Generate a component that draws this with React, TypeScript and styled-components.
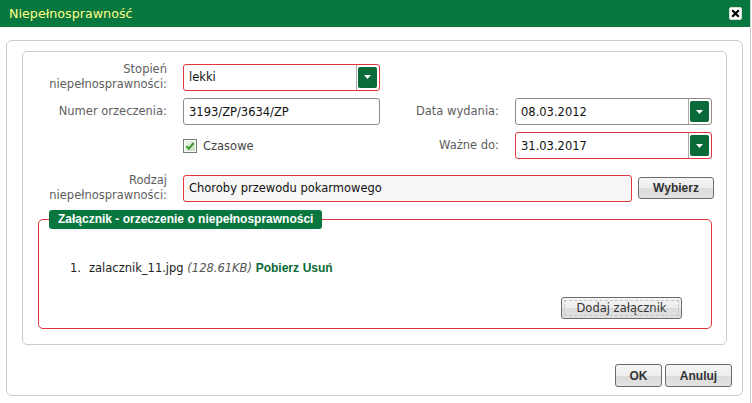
import React from "react";
import styled, { createGlobalStyle } from "styled-components";

const Global = createGlobalStyle`
  html, body { margin: 0; padding: 0; background: #fff; }
  body {
    font-family: "DejaVu Sans", Verdana, sans-serif;
    font-size: 11.5px;
    color: #222;
  }
  * { box-sizing: border-box; }
`;

const GREEN = "#08763f";
const RED = "#e1373c";
const BOLD_FONT = `"Liberation Sans", Arial, sans-serif`;

const Dialog = styled.div`
  width: 751px;
  height: 403px;
  border-right: 1px solid #cfcfcf;
  display: flex;
  flex-direction: column;
  background: #fff;
`;

const TitleBar = styled.div`
  height: 27px;
  flex: none;
  background: ${GREEN};
  display: flex;
  align-items: center;
  justify-content: space-between;
  padding: 0 8px 0 9px;
  color: #ffff86;
  font-size: 12.7px;
`;

const CloseButton = styled.div`
  width: 13px;
  height: 13px;
  background: #fff;
  border: 1px solid #d8d8d8;
  border-radius: 2px;
  display: flex;
  align-items: center;
  justify-content: center;
`;

const Body = styled.div`
  flex: 1;
  display: flex;
  padding: 13px 7px 7px 6px;
`;

const OuterFrame = styled.div`
  flex: 1;
  display: flex;
  flex-direction: column;
  border: 1px solid #cccccc;
  border-radius: 6px;
  padding: 10px 10px 8px 15px;
`;

const InnerFrame = styled.div`
  border: 1px solid #cccccc;
  border-radius: 5px;
  margin-right: 5px;
  padding: 10px 0 15px 0;
`;

const FormRow = styled.div<{ $mt?: number }>`
  display: grid;
  grid-template-columns: 160px 197px 135px 197px;
  height: 27px;
  margin-top: ${(p) => p.$mt ?? 0}px;
  align-items: center;
`;

const Label = styled.div`
  text-align: right;
  padding-right: 16px;
  color: #5e5e5e;
  line-height: 15px;
`;

const Field = styled.div<{ $invalid?: boolean; $muted?: boolean; $width?: number }>`
  height: 27px;
  width: ${(p) => (p.$width ? `${p.$width}px` : "100%")};
  border: 1px solid ${(p) => (p.$invalid ? RED : "#8c8c8c")};
  border-radius: 3px;
  background: ${(p) => (p.$muted ? "#f7f7f7" : "#fff")};
  display: flex;
  align-items: center;
  color: #111;
  flex: none;
`;

const FieldText = styled.span`
  flex: 1;
  padding-left: 5px;
  white-space: nowrap;
  overflow: hidden;
`;

const DropCell = styled.div`
  align-self: stretch;
  border-left: 1px solid #a9a9a9;
  padding: 2px 2px 2px 1px;
  display: flex;
`;

const DropButton = styled.div`
  width: 19px;
  background: #0b6a39;
  border-radius: 2px;
  display: flex;
  align-items: center;
  justify-content: center;
`;

const CheckWrap = styled.label`
  display: flex;
  align-items: center;
  gap: 6px;
  color: #444;
`;

const Wide = styled.div`
  grid-column: 2 / span 3;
  display: flex;
  align-items: center;
  gap: 6px;
`;

const Button = styled.button<{ $w: number; $h?: number; $bold?: boolean; $focus?: boolean }>`
  width: ${(p) => p.$w}px;
  height: ${(p) => p.$h ?? 22}px;
  padding: 0;
  border: 1px solid #6b6b6b;
  border-radius: 3px;
  background: linear-gradient(#f5f5f5 0%, #ededed 50%, #dcdcdc 51%, #e2e2e2 100%);
  font-family: ${(p) => (p.$bold ? BOLD_FONT : `"DejaVu Sans", Verdana, sans-serif`)};
  font-size: ${(p) => (p.$bold ? "12px" : "11.5px")};
  font-weight: ${(p) => (p.$bold ? 700 : 400)};
  color: #333;
  outline: ${(p) => (p.$focus ? "1px dashed #c4c4c4" : "none")};
  outline-offset: -4px;
  flex: none;
`;

const Attach = styled.fieldset`
  margin: 10px 14px 0 15px;
  border: 1px solid ${RED};
  border-radius: 5px;
  padding: 0 29px 9px 10px;
  min-width: 0;
`;

const Legend = styled.legend`
  height: 19px;
  line-height: 19px;
  padding: 0 9px;
  background: ${GREEN};
  color: #fff;
  font-family: ${BOLD_FONT};
  font-weight: 700;
  font-size: 12px;
  border-radius: 3px;
`;

const FileList = styled.ol`
  margin: 32px 0 0;
  padding-left: 40px;
  line-height: 14px;
  color: #222;
  list-style: none;
`;

const FileItem = styled.li`
  &::before {
    content: counter(list-item) ".";
    display: inline-block;
    width: 19px;
    margin-left: -19px;
  }
`;

const Size = styled.i`
  color: #555;
`;

const Link = styled.a`
  color: #0a6a37;
  font-family: ${BOLD_FONT};
  font-weight: 700;
  font-size: 12px;
  text-decoration: none;
`;

const AttachActions = styled.div`
  display: flex;
  justify-content: flex-end;
  margin-top: 22px;
`;

const Footer = styled.div`
  margin-top: auto;
  display: flex;
  justify-content: flex-end;
  gap: 3px;
`;

const Caret = () => (
  <svg width="7" height="4" viewBox="0 0 7 4">
    <path d="M0 0 H7 L3.5 4 Z" fill="#fff" />
  </svg>
);

const Select = ({ value, invalid }: { value: string; invalid?: boolean }) => (
  <Field $invalid={invalid}>
    <FieldText>{value}</FieldText>
    <DropCell>
      <DropButton>
        <Caret />
      </DropButton>
    </DropCell>
  </Field>
);

const CheckIcon = () => (
  <svg width="14" height="14" viewBox="0 0 14 14">
    <defs>
      <linearGradient id="cbg" x1="0" y1="0" x2="1" y2="1">
        <stop offset="0" stopColor="#eef8ea" />
        <stop offset="1" stopColor="#c2dfb8" />
      </linearGradient>
    </defs>
    <rect x="0.5" y="0.5" width="13" height="13" fill="#fff" stroke="#6f7f70" />
    <rect x="2" y="2" width="10" height="10" fill="url(#cbg)" />
    <path d="M3.4 7.2 L5.9 9.6 L10.6 4" fill="none" stroke="#3f9433" strokeWidth="2" />
  </svg>
);

export default function App() {
  return (
    <>
      <Global />
      <Dialog>
        <TitleBar>
          <span>Niepełnosprawność</span>
          <CloseButton>
            <svg width="9" height="9" viewBox="0 0 9 9">
              <path d="M1.2 1.2 L7.8 7.8 M7.8 1.2 L1.2 7.8" stroke="#000" strokeWidth="2.2" />
            </svg>
          </CloseButton>
        </TitleBar>
        <Body>
          <OuterFrame>
            <InnerFrame>
              <FormRow>
                <Label>
                  Stopień
                  <br />
                  niepełnosprawności:
                </Label>
                <Select value="lekki" invalid />
              </FormRow>
              <FormRow $mt={9}>
                <Label>Numer orzeczenia:</Label>
                <Field>
                  <FieldText>3193/ZP/3634/ZP</FieldText>
                </Field>
                <Label>Data wydania:</Label>
                <Select value="08.03.2012" />
              </FormRow>
              <FormRow $mt={7}>
                <div />
                <CheckWrap>
                  <CheckIcon />
                  Czasowe
                </CheckWrap>
                <Label>Ważne do:</Label>
                <Select value="31.03.2017" invalid />
              </FormRow>
              <FormRow $mt={14}>
                <Label>
                  Rodzaj
                  <br />
                  niepełnosprawności:
                </Label>
                <Wide>
                  <Field $invalid $muted $width={449}>
                    <FieldText>Choroby przewodu pokarmowego</FieldText>
                  </Field>
                  <Button $w={76} $bold>
                    Wybierz
                  </Button>
                </Wide>
              </FormRow>
              <Attach>
                <Legend>Załącznik - orzeczenie o niepełnosprawności</Legend>
                <FileList>
                  <FileItem>
                    zalacznik_11.jpg <Size>(128.61KB)</Size> <Link>Pobierz</Link>{" "}
                    <Link>Usuń</Link>
                  </FileItem>
                </FileList>
                <AttachActions>
                  <Button $w={121} $focus>
                    Dodaj załącznik
                  </Button>
                </AttachActions>
              </Attach>
            </InnerFrame>
            <Footer>
              <Button $w={47} $h={23} $bold>
                OK
              </Button>
              <Button $w={67} $h={23} $bold>
                Anuluj
              </Button>
            </Footer>
          </OuterFrame>
        </Body>
      </Dialog>
    </>
  );
}
